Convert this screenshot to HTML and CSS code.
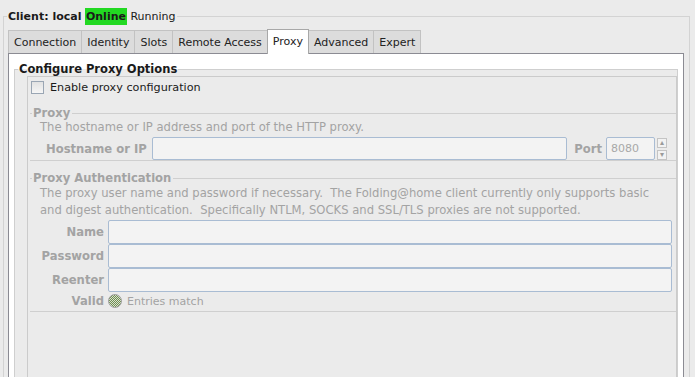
FILE: index.html
```html
<!DOCTYPE html>
<html>
<head>
    <title>FAHControl - Proxy</title>
    <link rel="stylesheet" href="styles.css">
</head>
<body>
    <fieldset class="client">
        <legend class="client-title"><b>Client: local</b> <span class="online">Online</span> Running</legend>

        <div class="tabs">
            <div class="tab">Connection</div>
            <div class="tab">Identity</div>
            <div class="tab">Slots</div>
            <div class="tab">Remote Access</div>
            <div class="tab active">Proxy</div>
            <div class="tab">Advanced</div>
            <div class="tab">Expert</div>
        </div>

        <div class="panel">
            <fieldset class="configure">
                <legend>Configure Proxy Options</legend>
                <div class="box">
                    <label class="check"><span class="checkbox"></span>Enable proxy configuration</label>

                    <div class="section proxy">
                        <div class="section-title">Proxy</div>
                        <div class="desc">The hostname or IP address and port of the HTTP proxy.</div>
                        <div class="host-row">
                            <span class="label">Hostname or IP</span>
                            <span class="input host"></span>
                            <span class="label port-label">Port</span>
                            <span class="input port">8080</span>
                            <span class="spinner">
                                <span class="spin">&#9652;</span>
                                <span class="spin">&#9662;</span>
                            </span>
                        </div>
                    </div>

                    <div class="section auth">
                        <div class="section-title">Proxy Authentication</div>
                        <div class="desc">The proxy user name and password if necessary.&nbsp; The Folding@home client currently only supports basic and digest authentication.&nbsp; Specifically NTLM, SOCKS and SSL/TLS proxies are not supported.</div>
                        <div class="auth-grid">
                            <span class="label">Name</span>
                            <span class="input"></span>
                            <span class="label">Password</span>
                            <span class="input"></span>
                            <span class="label">Reenter</span>
                            <span class="input"></span>
                            <span class="label">Valid</span>
                            <span class="valid"><span class="led"></span>Entries match</span>
                        </div>
                    </div>
                </div>
            </fieldset>
        </div>
    </fieldset>
</body>
</html>
```

FILE: styles.css
```css
body { margin: 0; background: #ebebeb; font-family: "DejaVu Sans", sans-serif; font-size: 11px; color: #1a1a1a; height: 377px; overflow: hidden; }

/* outer client frame */
.client { margin: 8px 5px 0 3px; padding: 4px 0 0 0; border: 1px solid #d3d3d3; border-bottom: none; height: 400px; }
.client-title { margin-left: 3px; padding: 0 1px; line-height: 17px; }
.online { background: #22d822; font-weight: bold; padding: 2px 1px; }

/* tabs */
.tabs { display: flex; align-items: flex-end; margin-left: 4px; height: 24px; }
.tab { height: 22px; line-height: 23px; padding: 0 5px; background: #dcdcdc; border: 1px solid #c2c2c2; border-bottom: none; color: #222; }
.tab + .tab { margin-left: -1px; }
.tab.active { background: #fff; height: 24px; line-height: 24px; border-color: #a8a8a8; position: relative; top: 1px; z-index: 1; }

.panel { margin-left: 4px; margin-right: 5px; background: #fff; border: 1px solid #8b8b93; padding: 0 5px; height: 360px; }

/* configure frame */
.configure { margin: 8px 0 0 0; padding: 0; border: 1px solid #cfcfcf; border-bottom: none; background: #ebebeb; height: 360px; }
.configure legend { margin-left: 3px; padding: 0 1px; font-weight: bold; font-size: 11.5px; line-height: 14px; color: #1a1a1a; }

.box { margin: 0 0 0 12px; border: 1px solid #cbcbcb; border-bottom: none; height: 340px; padding: 0 0 0 1px; }

.check { display: flex; align-items: center; gap: 6px; margin: 3px 0 0 2px; height: 14px; color: #1a1a1a; font-size: 11.2px; }
.checkbox { width: 11px; height: 11px; border: 1px solid #9aa6b4; background: linear-gradient(#e2e2e2, #f6f6f6); }

/* sections */
.section { margin-left: 1px; border-bottom: 1px solid #cfcfcf; color: #a3a3a3; font-size: 11.6px; }
.section-title { display: flex; align-items: center; font-weight: bold; line-height: 14px; }
.section-title::before { content: ""; width: 2px; border-top: 1px solid #cfcfcf; margin-right: 1px; }
.section-title::after { content: ""; flex: 1; border-top: 1px solid #cfcfcf; margin-left: 2px; }
.proxy { margin-top: 12px; }
.auth { margin-top: 10px; }
.desc { padding-left: 10px; line-height: 17px; padding-right: 2px; }
.proxy .desc { line-height: 15px; }

.label { font-weight: bold; text-align: right; }
.input { display: block; height: 22px; border: 1px solid #a9bcd3; border-radius: 2px; background: #f3f3f3; box-sizing: content-box; }

.host-row { display: flex; align-items: center; padding: 2px 9px 0 16px; }
.host-row .host { flex: 1; margin-left: 5px; height: 21px; }
.port-label { margin-left: 7px; }
.port { width: 43px; height: 21px; margin-left: 4px; padding-left: 4px; line-height: 21px; color: #a8a8a8; font-size: 11px; }
.spinner { display: flex; flex-direction: column; gap: 2px; margin-left: 2px; }
.spin { width: 8px; height: 8px; border: 1px solid #c4c4c4; background: #f2f2f2; font-size: 8px; line-height: 8px; text-align: center; color: #9a9a9a; }

.auth-grid { display: grid; grid-template-columns: 66px 1fr; column-gap: 4px; align-items: center; padding: 1px 4px 1px 8px; }
.valid { display: flex; align-items: center; gap: 5px; height: 18px; font-size: 11px; }
.led { width: 12px; height: 12px; border-radius: 50%; border: 1px solid #a0a0a0; background: repeating-conic-gradient(#6f8f4f 0 25%, #d8e0d0 0 50%) 0 0 / 2px 2px; }
```
